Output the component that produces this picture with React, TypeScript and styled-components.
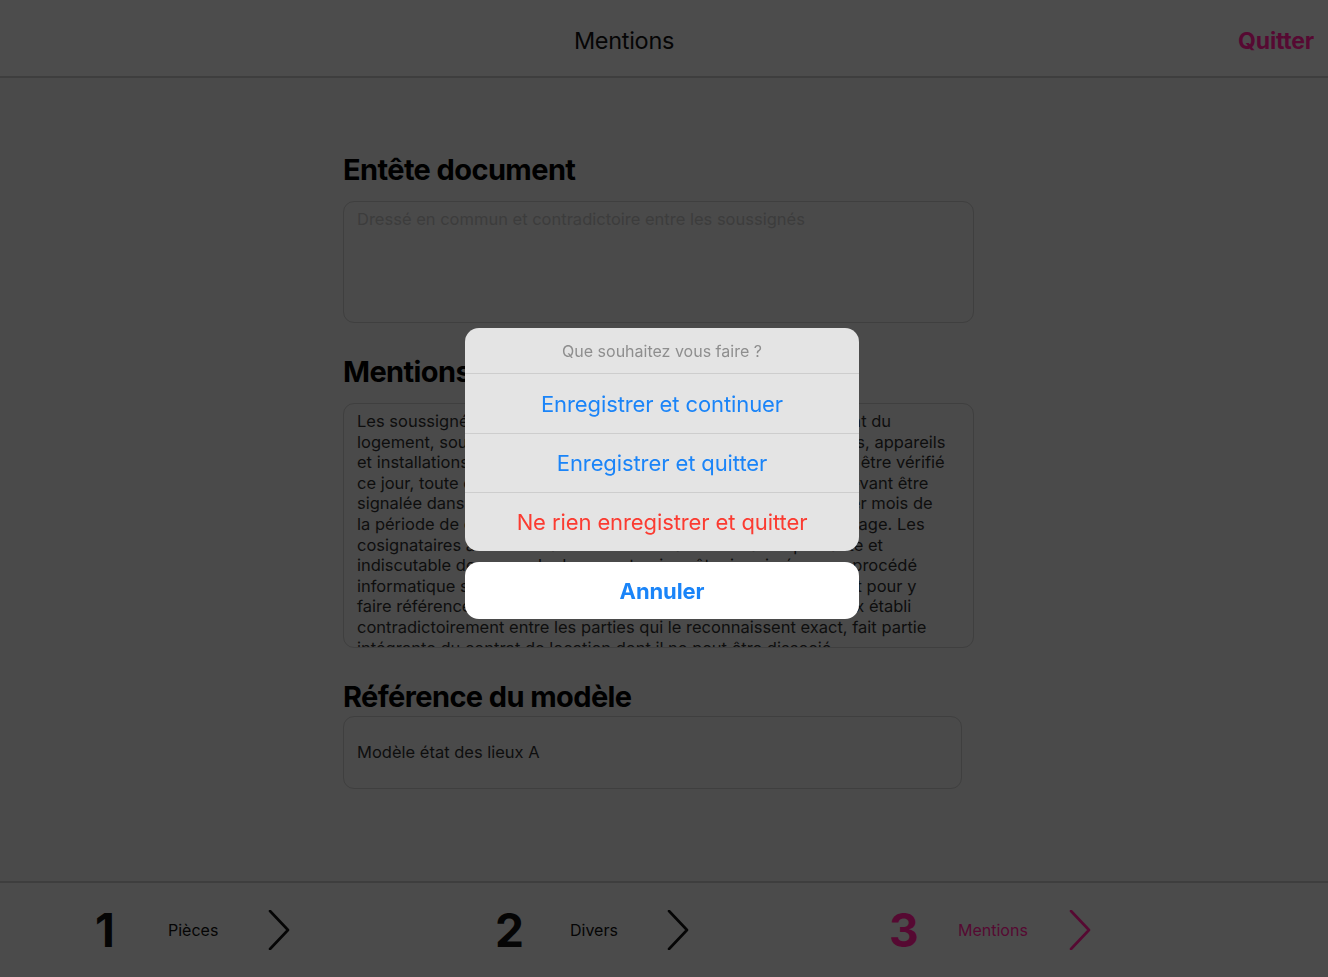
import styled, { createGlobalStyle } from 'styled-components'

const GlobalStyle = createGlobalStyle`
  html, body {
    margin: 0;
    padding: 0;
    background: #4a4a4a;
    font-family: Inter, "Noto Sans", "Liberation Sans", sans-serif;
    -webkit-font-smoothing: antialiased;
  }
`

const Screen = styled.div`
  display: flex;
  flex-direction: column;
  height: 977px;
  background: #4a4a4a;
  overflow: hidden;
`

const TopBar = styled.header`
  position: relative;
  display: flex;
  align-items: center;
  justify-content: center;
  box-sizing: border-box;
  height: 78px;
  padding: 4px 80px 0 0;
  background: #4c4c4c;
  border-bottom: 2px solid #3e3e3e;
`

const Title = styled.h1`
  margin: 0;
  font-size: 23.5px;
  font-weight: 400;
  color: #050505;
  letter-spacing: -0.3px;
`

const QuitButton = styled.button`
  position: absolute;
  right: 14px;
  top: 27px;
  border: 0;
  background: none;
  padding: 0;
  font-family: inherit;
  font-size: 23px;
  font-weight: 700;
  color: #560932;
  letter-spacing: -0.2px;
`

const Main = styled.main`
  flex: 1;
  padding: 74px 0 0 343px;
`

const Section = styled.section`
  width: 631px;
  margin-bottom: 31px;
`

const Heading = styled.h2<{ $gap?: number }>`
  margin: 0 0 ${p => p.$gap ?? 13}px;
  height: 36px;
  line-height: 36px;
  font-size: 29px;
  font-weight: 700;
  color: #000;
  letter-spacing: -0.6px;
`

const Field = styled.div<{ $height: number; $width?: number }>`
  box-sizing: border-box;
  width: ${p => p.$width ?? 631}px;
  height: ${p => p.$height}px;
  padding: 7px 13px 0;
  border: 1.5px solid #3f3f3f;
  border-radius: 11px;
  overflow: hidden;
  font-size: 16.5px;
  line-height: 20.6px;
  color: #0e0e0e;
`

const Placeholder = styled.span`
  color: #3c3c3c;
`

const Line = styled.span`
  display: block;
  white-space: nowrap;
`

const InputField = styled(Field)`
  display: flex;
  align-items: center;
  padding-top: 0;
`

const Footer = styled.footer`
  display: flex;
  height: 94px;
  padding-left: 95px;
  border-top: 2px solid #3e3e3e;
  background: #4b4b4b;
`

const Step = styled.div<{ $active?: boolean; $width: number }>`
  display: flex;
  align-items: center;
  width: ${p => p.$width}px;
  color: ${p => (p.$active ? '#560932' : '#050505')};
`

const StepNumber = styled.span<{ $width: number }>`
  width: ${p => p.$width}px;
  font-size: 46px;
  font-weight: 700;
  line-height: 1;
`

const StepLabel = styled.span<{ $width: number }>`
  width: ${p => p.$width}px;
  font-size: 16px;
  color: inherit;
`

const Backdrop = styled.div`
  position: fixed;
  inset: 0;
`

const Sheet = styled.div`
  position: absolute;
  left: 465px;
  top: 328px;
  width: 394px;
  display: flex;
  flex-direction: column;
  gap: 11px;
`

const Group = styled.div`
  background: #e4e4e4;
  border-radius: 14px;
  overflow: hidden;
`

const SheetTitle = styled.div`
  height: 45px;
  display: flex;
  align-items: center;
  justify-content: center;
  font-size: 16px;
  color: #8e8e8e;
  border-bottom: 1px solid #cdcdcd;
`

const Action = styled.button<{ $danger?: boolean; $bold?: boolean }>`
  display: flex;
  align-items: center;
  justify-content: center;
  width: 100%;
  height: 59px;
  padding: 0;
  border: 0;
  background: none;
  font-family: inherit;
  font-size: 22px;
  font-weight: ${p => (p.$bold ? 700 : 400)};
  color: ${p => (p.$danger ? '#fb3b31' : '#1a84f8')};
  letter-spacing: -0.1px;
  & + & {
    border-top: 1px solid #cdcdcd;
  }
`

const CancelGroup = styled.div`
  background: #fff;
  border-radius: 14px;
  overflow: hidden;
  & > button {
    height: 57px;
  }
`

function Chevron() {
  return (
    <svg width="22" height="40" viewBox="0 0 22 40" fill="none">
      <polyline points="2,1 20,20 2,39" stroke="currentColor" strokeWidth="2.6" strokeLinecap="round" strokeLinejoin="round" />
    </svg>
  )
}

const mentionLines = [
  'Les soussignés déclarent avoir pris connaissance du présent état du',
  'logement, sous réserve du bon fonctionnement des canalisations, appareils',
  'et installations sanitaires, électriques et de chauffage n’ayant pu être vérifié',
  'ce jour, toute défectuosité dans le fonctionnement de ceux-ci devant être',
  'signalée dans le délai de huit jours par écrit et pendant le premier mois de',
  'la période de chauffe en ce qui concerne les éléments de chauffage. Les',
  'cosignataires accordent à ce document la même valeur probante et',
  'indiscutable de ce que le document puisse être imprimé par un procédé',
  'informatique sans signature, se suffisant à lui-même uniquement pour y',
  'faire référence ultérieurement si besoin. Le présent état des lieux établi',
  'contradictoirement entre les parties qui le reconnaissent exact, fait partie',
  'intégrante du contrat de location dont il ne peut être dissocié.',
]

const steps = [
  { n: '1', label: 'Pièces', width: 400, numWidth: 73, labelWidth: 100 },
  { n: '2', label: 'Divers', width: 394, numWidth: 75, labelWidth: 97 },
  { n: '3', label: 'Mentions', width: 300, numWidth: 69, labelWidth: 111, active: true },
]

export default function App() {
  return (
    <>
      <GlobalStyle />
      <Screen>
        <TopBar>
          <Title>Mentions</Title>
          <QuitButton>Quitter</QuitButton>
        </TopBar>
        <Main>
          <Section>
            <Heading>Entête document</Heading>
            <Field $height={122}>
              <Placeholder>Dressé en commun et contradictoire entre les soussignés</Placeholder>
            </Field>
          </Section>
          <Section>
            <Heading>Mentions</Heading>
            <Field $height={245}>
              {mentionLines.map(l => (
                <Line key={l}>{l}</Line>
              ))}
            </Field>
          </Section>
          <Section>
            <Heading $gap={1}>Référence du modèle</Heading>
            <InputField $height={73} $width={619}>Modèle état des lieux A</InputField>
          </Section>
        </Main>
        <Footer>
          {steps.map(s => (
            <Step key={s.n} $active={s.active} $width={s.width}>
              <StepNumber $width={s.numWidth}>{s.n}</StepNumber>
              <StepLabel $width={s.labelWidth}>{s.label}</StepLabel>
              <Chevron />
            </Step>
          ))}
        </Footer>
      </Screen>
      <Backdrop>
        <Sheet>
          <Group>
            <SheetTitle>Que souhaitez vous faire ?</SheetTitle>
            <Action>Enregistrer et continuer</Action>
            <Action>Enregistrer et quitter</Action>
            <Action $danger>Ne rien enregistrer et quitter</Action>
          </Group>
          <CancelGroup>
            <Action $bold>Annuler</Action>
          </CancelGroup>
        </Sheet>
      </Backdrop>
    </>
  )
}
